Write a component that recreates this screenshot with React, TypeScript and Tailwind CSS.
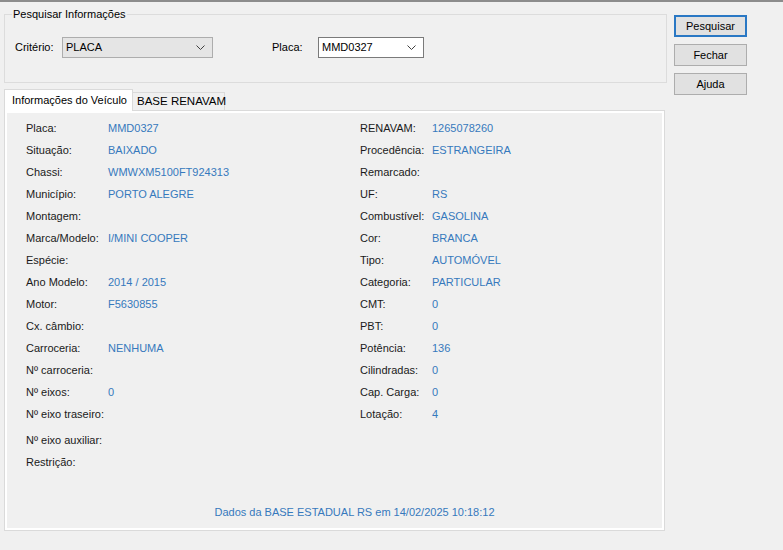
import type { ReactNode } from "react";

type Field = { label: string; value?: string; gap?: boolean };

const leftFields: Field[] = [
  { label: "Placa:", value: "MMD0327" },
  { label: "Situação:", value: "BAIXADO" },
  { label: "Chassi:", value: "WMWXM5100FT924313" },
  { label: "Município:", value: "PORTO ALEGRE" },
  { label: "Montagem:" },
  { label: "Marca/Modelo:", value: "I/MINI COOPER" },
  { label: "Espécie:" },
  { label: "Ano Modelo:", value: "2014 / 2015" },
  { label: "Motor:", value: "F5630855" },
  { label: "Cx. câmbio:" },
  { label: "Carroceria:", value: "NENHUMA" },
  { label: "Nº carroceria:" },
  { label: "Nº eixos:", value: "0" },
  { label: "Nº eixo traseiro:" },
  { label: "Nº eixo auxiliar:", gap: true },
  { label: "Restrição:" },
];

const rightFields: Field[] = [
  { label: "RENAVAM:", value: "1265078260" },
  { label: "Procedência:", value: "ESTRANGEIRA" },
  { label: "Remarcado:" },
  { label: "UF:", value: "RS" },
  { label: "Combustível:", value: "GASOLINA" },
  { label: "Cor:", value: "BRANCA" },
  { label: "Tipo:", value: "AUTOMÓVEL" },
  { label: "Categoria:", value: "PARTICULAR" },
  { label: "CMT:", value: "0" },
  { label: "PBT:", value: "0" },
  { label: "Potência:", value: "136" },
  { label: "Cilindradas:", value: "0" },
  { label: "Cap. Carga:", value: "0" },
  { label: "Lotação:", value: "4" },
];

const Chevron = () => (
  <svg width="9" height="5" viewBox="0 0 9 5" className="shrink-0">
    <path d="M0.5 0.5 L4.5 4.5 L8.5 0.5" fill="none" stroke="#404040" strokeWidth="1" />
  </svg>
);

const Combo = ({ value, disabled, width }: { value: string; disabled?: boolean; width: string }) => (
  <div
    className={`${width} h-[21px] flex items-center justify-between pl-[3px] pr-[7px] border ${
      disabled ? "bg-[#e5e5e5] border-[#adadad]" : "bg-white border-[#7a7a7a]"
    }`}
  >
    <span className="text-[11px] text-black">{value}</span>
    <Chevron />
  </div>
);

const WinButton = ({ children, focused }: { children: ReactNode; focused?: boolean }) => (
  <button
    className={`w-[73px] h-[22px] bg-[#e1e1e1] text-[11px] text-black flex items-center justify-center ${
      focused ? "border-2 border-[#2a78c4]" : "border border-[#adadad]"
    }`}
  >
    {children}
  </button>
);

const FieldColumn = ({ fields, labelWidth }: { fields: Field[]; labelWidth: string }) => (
  <div className="flex flex-col">
    {fields.map((f) => (
      <div key={f.label} className={`flex items-center h-[22px] ${f.gap ? "mt-[4px]" : ""}`}>
        <span className={`${labelWidth} shrink-0 text-[#1a1a1a]`}>{f.label}</span>
        {f.value && <span className="text-[#3679bd]">{f.value}</span>}
      </div>
    ))}
  </div>
);

export default function App() {
  return (
    <div className="w-[783px] h-[550px] bg-[#f0f0f0] font-['Liberation_Sans',Arial,sans-serif] text-[11px] leading-[13px] text-black overflow-hidden">
      <div className="h-[2px] bg-[#8c8c8c]" />
      <div className="flex pl-[4px]">
        <div className="w-[662px]">
          {/* - Pesquisar Informações - */}
          <fieldset className="mt-[6px] h-[75px] w-[663px] border border-[#dcdcdc] px-[10px]">
            <legend className="px-[1px] text-[11px] ml-[-3px]">Pesquisar Informações</legend>
            <div className="flex items-center mt-[16px]">
              <span className="w-[47px]">Critério:</span>
              <Combo value="PLACA" disabled width="w-[151px]" />
              <span className="ml-[59px] w-[46px]">Placa:</span>
              <Combo value="MMD0327" width="w-[106px]" />
            </div>
          </fieldset>

          {/* - Abas - */}
          <div className="flex items-end mt-[6px] h-[21px]">
            <div className="h-[22px] w-[129px] bg-white border border-b-0 border-[#dadada] pl-[7px] flex items-center relative z-10 translate-y-[1px] whitespace-nowrap">
              Informações do Veículo
            </div>
            <div className="h-[18px] w-[92px] bg-[#f0f0f0] border border-l-0 border-b-0 border-[#dadada] pl-[4px] flex items-center whitespace-nowrap text-[11.5px]">
              BASE RENAVAM
            </div>
          </div>

          {/* - Painel - */}
          <div className="w-[661px] h-[421px] border border-[#dadada] bg-white p-[2px]">
            <div className="h-full bg-[#f0f0f0] flex flex-col">
              <div className="flex pt-[4px] pl-[19px]">
                <div className="w-[334px]">
                  <FieldColumn fields={leftFields} labelWidth="w-[82px]" />
                </div>
                <FieldColumn fields={rightFields} labelWidth="w-[72px]" />
              </div>
              <div className="mt-auto pb-[9px] text-center text-[#3679bd] pl-[40px]">
                Dados da BASE ESTADUAL RS em 14/02/2025 10:18:12
              </div>
            </div>
          </div>
        </div>

        {/* - Botões - */}
        <div className="ml-[8px] pt-[13px] flex flex-col gap-[7px]">
          <WinButton focused>Pesquisar</WinButton>
          <WinButton>Fechar</WinButton>
          <WinButton>Ajuda</WinButton>
        </div>
      </div>
    </div>
  );
}
